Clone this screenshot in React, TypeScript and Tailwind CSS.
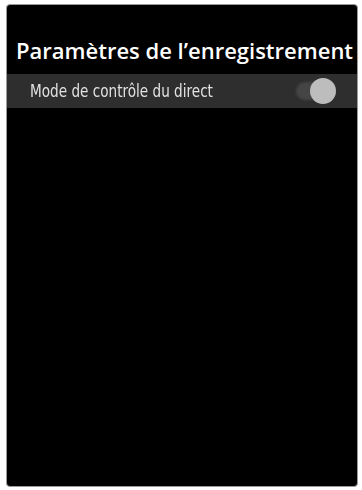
export default function App() {
  return (
    <div className="w-[362px] h-[490px] bg-white pt-[4px] pl-[6px] pr-[4px] pb-[3px]">
      <div className="w-full h-full bg-black rounded-[4px] border border-[#9a9a9a] flex flex-col overflow-hidden">
        <div className="h-[69px] flex items-end pl-[9px] pb-[13px]">
          <span
            className="text-white text-[22px] font-semibold leading-none whitespace-nowrap"
            style={{ fontFamily: '"Open Sans", sans-serif' }}
          >
            Paramètres de l’enregistrement
          </span>
        </div>
        <div className="h-[34px] bg-[#2e2e2e] flex items-center pl-[23px] pr-[21px] justify-between">
          <span
            className="inline-block origin-left scale-x-[0.84] text-[#e2e2e2] text-[18px] leading-none whitespace-nowrap"
            style={{ fontFamily: '"DejaVu Sans Condensed", "DejaVu Sans", sans-serif' }}
          >
            Mode de contrôle du direct
          </span>
          <div className="relative w-[40px] h-[26px] flex items-center">
            <div className="w-[36px] h-[18px] rounded-full bg-[#454545] blur-[1px]" />
            <div className="absolute right-0 top-0 w-[26px] h-[26px] rounded-full bg-[#bdbdbd] blur-[0.5px]" />
          </div>
        </div>
        <div className="flex-1" />
      </div>
    </div>
  );
}
